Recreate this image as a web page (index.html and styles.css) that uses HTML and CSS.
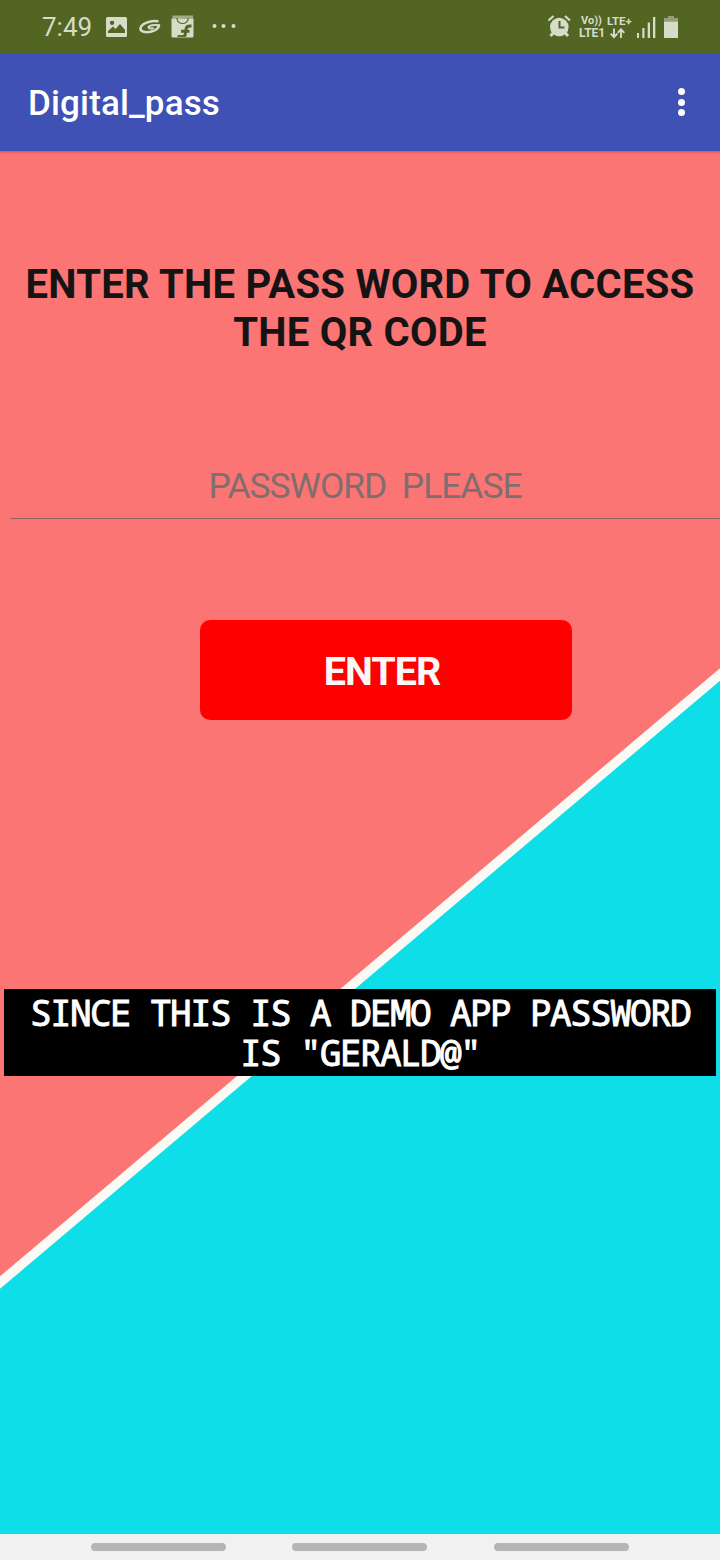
FILE: index.html
```
<!DOCTYPE html>
<html lang="en">
<head>
<meta charset="utf-8">
<title>Digital_pass</title>
<link rel="stylesheet" href="styles.css">
</head>
<body>
<div class="screen">
  <header class="status">
    <span class="time">7:49</span>
    <svg class="notifications" width="126" height="30" viewBox="104 12 126 30">
      <path fill-rule="evenodd" d="M107.500 17h18q1.500 0 1.500 1.500v17q0 1.500-1.500 1.500h-18q-1.500 0-1.500-1.500v-17q0-1.500 1.500-1.500zM108 33h17v-3l-5-6-4.500 5-2.500-2.500-5 4.500zM112 20.700a2.200 2.200 0 1 0 .1 0z"/>
      <g fill="none" stroke="#d6dcc8" stroke-linecap="round"><path d="M157.500 21.300C150 20 141.500 24 140.500 28c-.7 4 5.500 5 11 3.500 4-1 7-3.500 7.500-6" stroke-width="2.600"/><path d="M159 25.300c-5-1-10 0-10.500 1.800-.2 1.300 2 1.500 4.500 1.200" stroke-width="2"/></g>
      <path d="M171.500 18.500h22V36q0 1.500-1.500 1.500h-19q-1.500 0-1.500-1.500z"/>
      <path d="M172.500 15.500h20.500v3h-20.500z" opacity=".6"/>
      <g fill="none" stroke="#536523"><path d="M177 18v.5a5.600 5 0 0 0 11.200 0V18" stroke-width="1.100"/><path d="M191.500 26h-1.500q-3.500 0-4 3l-1.200 7.500M181 31.300h8.500" stroke-width="3"/><path d="M185.500 36h-8" stroke-width="1.800"/></g>
      <circle cx="214.500" cy="26" r="2"/><circle cx="223.500" cy="26" r="2"/>
    </svg>
    <svg class="more" width="8" height="30" viewBox="0 0 8 30"><circle cx="3.500" cy="14" r="2"/></svg>
    <svg class="alarm" width="26" height="28" viewBox="547 13 26 28">
      <circle cx="559.300" cy="27" r="9.300"/>
      <path d="M554 32l-3.500 4M564.500 32l3.500 4" stroke="#d6dcc8" stroke-width="3"/>
      <path d="M548.500 20.500l5-4.500M570 20.500l-5-4.500" stroke="#d6dcc8" stroke-width="2.200"/>
      <path d="M559.500 21v6.500h5" fill="none" stroke="#536523" stroke-width="2"/>
    </svg>
    <div class="network">
      <div class="net-row"><span class="volte">Vo))</span><span class="lte">LTE+</span></div>
      <div class="net-row"><span class="sim">LTE1</span>
        <svg width="15" height="11" viewBox="0 0 15 11" fill="none"><path d="M4 .5v8.500M.7 5.700L4 9.200l3.300-3.500M11 10V1.500M7.700 4.900L11 1.300l3.300 3.600" stroke="#d6dcc8" stroke-width="1.900"/></svg>
      </div>
    </div>
    <svg class="signal" width="44" height="24" viewBox="636 15 44 24">
      <path d="M637 33h2v5h-2zM642.300 28h2.200v10h-2.200zM647.700 22.500h2.300V38h-2.300zM653 17h2.300v21H653z"/>
      <path opacity=".5" d="M668 16h6v2h4v3.500h-14V18h4z"/><path d="M664 21.500h14V38h-14z"/>
    </svg>
  </header>
  <div class="appbar">
    <h1 class="title">Digital_pass</h1>
    <div class="overflow"><i class="dot"></i><i class="dot"></i><i class="dot"></i></div>
  </div>
  <main class="content">
    <svg class="backdrop" width="720" height="1383" viewBox="0 151 720 1383">
      <path fill="#0edee8" d="M0 1282L720 674v860H0z"/>
      <path d="M-10 1291L730 666" stroke="#fbfaf5" stroke-width="9.500"/>
    </svg>
    <h2 class="prompt">ENTER THE PASS WORD TO ACCESS<br>THE QR CODE</h2>
    <div class="field"><span class="hint">PASSWORD&nbsp; PLEASE</span></div>
    <button class="enter">ENTER</button>
    <p class="note">SINCE THIS IS A DEMO APP PASSWORD<br>IS "GERALD@"</p>
  </main>
  <footer class="nav"><i class="pill"></i><i class="pill"></i><i class="pill"></i></footer>
</div>
</body>
</html>
```
FILE: styles.css
```
* { box-sizing: border-box; }
body { margin: 0; font-family: Roboto, sans-serif; }
.screen { width: 720px; height: 1560px; display: flex; flex-direction: column; overflow: hidden; }
svg { display: block; flex: none; }
.status { height: 53px; flex: none; display: flex; align-items: flex-start; background: #536523; padding-left: 42px; color: #d6dcc8; fill: #d6dcc8; position: relative; z-index: 2; }
.time { width: 62px; flex: none; font-size: 26px; line-height: 30px; padding-top: 12px; white-space: nowrap; }
.notifications { margin-top: 12px; }
.more { margin-top: 12px; }
.alarm { margin: 13px 0 0 309px; }
.network { width: 58px; margin: 15px 0 0 6px; font-size: 11px; font-weight: 700; line-height: 12px; }
.net-row { display: flex; height: 12px; white-space: nowrap; align-items: center; }
.volte { width: 28px; padding-left: 2px; }
.lte { font-size: 11.500px; }
.sim { width: 31px; font-size: 12px; }
.signal { margin: 15px 0 0 -1px; }
.appbar { height: 98px; flex: none; background: #3f51b5; display: flex; align-items: center; justify-content: space-between; padding: 0 35.500px 0 28px; box-shadow: 0 1px 3px rgba(70, 20, 40, .35); z-index: 1; }
.title { margin: 4px 0 0; color: #fff; font-size: 35px; line-height: 42px; font-weight: 500; letter-spacing: .15px; }
.overflow { display: grid; gap: 3.500px; }
.dot { width: 7px; height: 7px; border-radius: 50%; background: #fff; }
.content { height: 1383px; flex: none; position: relative; background: #fc7575; display: flex; flex-direction: column; }
.backdrop { position: absolute; inset: 0; }
.content > :not(.backdrop) { position: relative; }
.prompt { margin: 110px 0 0; text-align: center; color: #141414; font-size: 40px; line-height: 48px; font-weight: 700; letter-spacing: .25px; white-space: nowrap; }
.field { height: 58px; margin: 104px 0 0 10px; border-bottom: 1px solid #8b6566; color: #806e6e; text-align: center; font-size: 35.500px; line-height: 42px; letter-spacing: -1.070px; padding-top: 4px; white-space: nowrap; }
.enter { width: 372px; height: 100px; margin: 101px 0 0 200px; border: 0; border-radius: 10px; background: #f00; color: #fcf8f8; font: 700 39.500px/46px Roboto, sans-serif; padding: 3px 8px 0 0; letter-spacing: -1px; }
.note { width: 712px; height: 87px; margin: 269px 0 0 4px; background: #000; color: #fff; text-align: center; font-family: "Noto Sans Mono", "DejaVu Sans Mono", monospace; font-size: 36px; line-height: 40px; letter-spacing: -1.600px; padding: 3.500px 0 0; white-space: nowrap; -webkit-text-stroke: 1px #fff; }
.nav { height: 26px; flex: none; background: #f1f1f1; display: flex; gap: 66.500px; padding: 9px 0 0 90.700px; }
.pill { width: 135px; height: 8px; border-radius: 4px; background: #b5b5b5; }
```
